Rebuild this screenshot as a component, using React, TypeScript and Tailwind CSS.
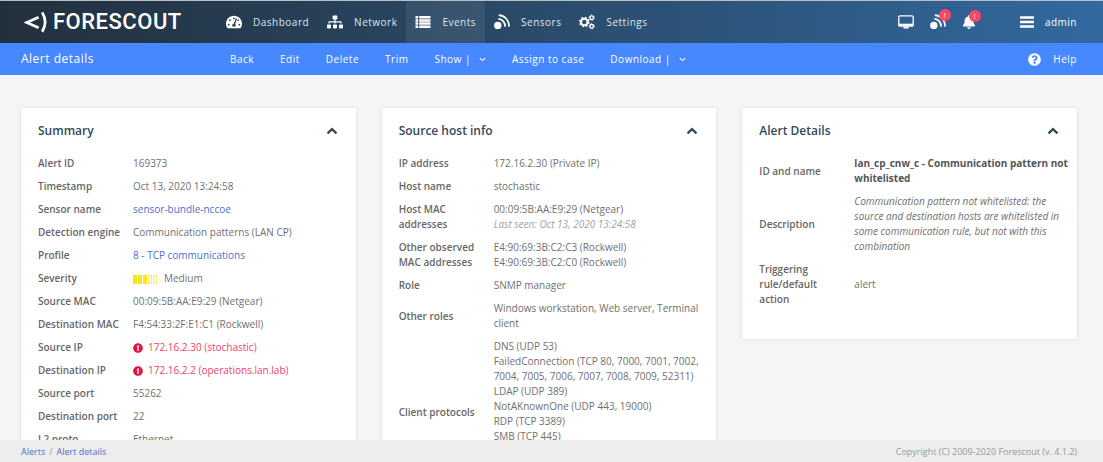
import { useState } from 'react';
import type { ReactNode } from 'react';
import { FaBell, FaExclamationCircle, FaQuestionCircle, FaSitemap, FaTachometerAlt } from 'react-icons/fa';

type Row = { label: string; value: ReactNode; className?: string };

const SensorIcon = ({ className }: { className?: string }) => (
  <svg viewBox="0 0 16 16" fill="none" stroke="currentColor" className={className}>
    <circle cx="3.8" cy="11.4" r="3.7" fill="currentColor" stroke="none" />
    <path d="M4.4 4.9a7 7 0 0 1 6.6 7.7" strokeWidth="1.7" />
    <path d="M4.8 1.2a10.6 10.6 0 0 1 10.200 11.400" strokeWidth="1.7" />
  </svg>
);

const MonitorIcon = () => (
  <svg viewBox="0 0 16 14" fill="none" stroke="currentColor" className="w-4 h-[14px]">
    <rect x="0.8" y="0.8" width="14.4" height="10.4" rx="1.2" strokeWidth="1.3" />
    <path d="M1 9.8h14" strokeWidth="2.2" />
    <path d="M5.4 12.6h5.2" strokeWidth="1.8" />
  </svg>
);

const ListIcon = () => (
  <svg viewBox="0 0 16 16" fill="none" stroke="currentColor" className="w-4 h-4">
    <path d="M0.500 3.200h2.700M0.500 6.400h2.700M0.500 9.600h2.700M0.500 12.800h2.700M4.200 3.200h11.300M4.200 6.400h11.300M4.200 9.600h11.300M4.200 12.800h11.300" strokeWidth="2.500" />
  </svg>
);

const BarsIcon = () => (
  <svg viewBox="0 0 14 14" fill="none" stroke="currentColor" className="w-[14px] h-[14px]">
    <path d="M0 2.500h14M0 7h14M0 11.500h14" strokeWidth="2.300" />
  </svg>
);

// each gear is a ring with a dashed ring around it for the teeth
const GearsIcon = () => (
  <svg viewBox="0 0 16 16" fill="none" stroke="currentColor" className="w-4 h-4">
    <circle cx="5.3" cy="8" r="3.3" strokeWidth="2.1" />
    <circle cx="5.3" cy="8" r="4.600" strokeWidth="1.400" strokeDasharray="1.900 1.713" />
    <circle cx="12.7" cy="3.7" r="1.8" strokeWidth="1.3" />
    <circle cx="12.7" cy="3.7" r="2.600" strokeWidth="1" strokeDasharray="1.300 1.423" />
    <circle cx="12.7" cy="12.3" r="1.8" strokeWidth="1.3" />
    <circle cx="12.7" cy="12.3" r="2.600" strokeWidth="1" strokeDasharray="1.300 1.423" />
  </svg>
);

const Chevron = ({ className, weight = 2.3 }: { className?: string; weight?: number }) => (
  <svg viewBox="0 0 12 8" fill="none" stroke="currentColor" className={className}>
    <path d="M1.5 6.4 6 2.1l4.5 4.3" strokeWidth={weight} />
  </svg>
);

const Logo = () => (
  <a href="#" className="flex items-center gap-1 text-white">
    <svg viewBox="0 0 25 22" fill="none" stroke="currentColor" className="w-[25px] h-[22px]">
      <path d="M14.6 6.300 2.600 11.500l12 5.200" strokeWidth="2.700" />
      <path d="M18.200 1.400c3.800 6.200 3.800 13.200 0 19.400" strokeWidth="2.700" />
    </svg>
    <span className="font-['Roboto',sans-serif] text-[22px] leading-6 font-medium">FORESCOUT</span>
  </a>
);

const SeverityBar = ({ level }: { level: number }) => (
  <span className="inline-flex gap-px mr-[7px] align-middle">
    {[1, 2, 3, 4, 5].map(n => (
      <span key={n} className={n <= level ? 'w-1 h-[9px] bg-[#f8e71c]' : 'w-1 h-[9px] border border-[#f6ec6a]'} />
    ))}
  </span>
);

const HostLink = ({ children }: { children: ReactNode }) => (
  <a href="#" className="flex items-center gap-[5px] text-[#ee4266]">
    <FaExclamationCircle className="w-[10px] h-[10px] text-[#e0163f]" />
    {children}
  </a>
);

const BlueLink = ({ children }: { children: ReactNode }) => (
  <a href="#" className="text-[#4a6fd0]">{children}</a>
);

const navItems = [
  { name: 'Dashboard', icon: <FaTachometerAlt className="w-4 h-4" /> },
  { name: 'Network', icon: <FaSitemap className="w-4 h-4" /> },
  { name: 'Events', icon: <ListIcon />, active: true },
  { name: 'Sensors', icon: <SensorIcon className="w-4 h-4" /> },
  { name: 'Settings', icon: <GearsIcon /> },
];

const actions = [
  { name: 'Back' },
  { name: 'Edit' },
  { name: 'Delete' },
  { name: 'Trim' },
  { name: 'Show', menu: true },
  { name: 'Assign to case' },
  { name: 'Download', menu: true },
];

const summary: Row[] = [
  { label: 'Alert ID', value: '169373' },
  { label: 'Timestamp', value: 'Oct 13, 2020 13:24:58' },
  { label: 'Sensor name', value: <BlueLink>sensor-bundle-nccoe</BlueLink> },
  { label: 'Detection engine', value: 'Communication patterns (LAN CP)' },
  { label: 'Profile', value: <BlueLink>8 - TCP communications</BlueLink> },
  { label: 'Severity', value: <><SeverityBar level={3} />Medium</> },
  { label: 'Source MAC', value: '00:09:5B:AA:E9:29 (Netgear)' },
  { label: 'Destination MAC', value: 'F4:54:33:2F:E1:C1 (Rockwell)' },
  { label: 'Source IP', value: <HostLink>172.16.2.30 (stochastic)</HostLink> },
  { label: 'Destination IP', value: <HostLink>172.16.2.2 (operations.lan.lab)</HostLink> },
  { label: 'Source port', value: '55262' },
  { label: 'Destination port', value: '22' },
  { label: 'L2 proto', value: 'Ethernet' },
];

const protocols = [
  'DNS (UDP 53)',
  'FailedConnection (TCP 80, 7000, 7001, 7002, 7004, 7005, 7006, 7007, 7008, 7009, 52311)',
  'LDAP (UDP 389)',
  'NotAKnownOne (UDP 443, 19000)',
  'RDP (TCP 3389)',
  'SMB (TCP 445)',
];

const sourceHost: Row[] = [
  { label: 'IP address', value: '172.16.2.30 (Private IP)' },
  { label: 'Host name', value: 'stochastic' },
  {
    label: 'Host MAC addresses',
    value: <>00:09:5B:AA:E9:29 (Netgear)<div className="italic text-[#a3a3a3]">Last seen: Oct 13, 2020 13:24:58</div></>,
  },
  {
    label: 'Other observed MAC addresses',
    value: <>E4:90:69:3B:C2:C3 (Rockwell)<div>E4:90:69:3B:C2:C0 (Rockwell)</div></>,
  },
  { label: 'Role', value: 'SNMP manager' },
  { label: 'Other roles', value: 'Windows workstation, Web server, Terminal client' },
  {
    label: 'Client protocols',
    value: protocols.map(p => <div key={p}>{p}</div>),
    className: 'h-[154px] align-top',
  },
];

const alertDetails: Row[] = [
  { label: 'ID and name', value: 'lan_cp_cnw_c - Communication pattern not whitelisted', className: 'font-bold text-[#555]' },
  {
    label: 'Description',
    value: 'Communication pattern not whitelisted: the source and destination hosts are whitelisted in some communication rule, but not with this combination',
    className: 'italic',
  },
  { label: 'Triggering rule/default action', value: 'alert' },
];

const Card = ({ title, rows }: { title: string; rows: Row[] }) => {
  const [open, setOpen] = useState(true);

  return (
    <section className="bg-white pl-[17px] pr-1 pb-7 shadow-[0_0_3px_rgba(0,0,0,0.12)]">
      <div className="flex items-center justify-between h-11 pt-[2px] pr-[14px] text-[#34495a]">
        <h2 className="text-[12px] leading-4 font-semibold">{title}</h2>
        <button aria-label={`Toggle ${title}`} aria-expanded={open} onClick={() => setOpen(!open)}>
          <Chevron className={open ? 'w-3 h-2' : 'w-3 h-2 rotate-180'} />
        </button>
      </div>
      {open && (
        <table className="w-full table-fixed text-[10px] leading-[15px] text-[#707070]">
          <tbody>
            {rows.map(row => (
              <tr key={row.label}>
                <th scope="row" className="w-[95px] py-1 pr-2 text-left font-semibold text-[#666]">{row.label}</th>
                <td className={`py-1 ${row.className || ''}`}>{row.value}</td>
              </tr>
            ))}
          </tbody>
        </table>
      )}
    </section>
  );
};

const Badge = () => (
  <span className="absolute -top-[5px] -right-[5px] w-3 h-3 rounded-full bg-[#ff4665] text-white text-[8px] leading-3 text-center">!</span>
);

export default function App() {
  return (
    <div className="h-screen flex flex-col overflow-hidden bg-[#f5f5f5] font-['Open_Sans',sans-serif]">

      {/* Main navigation */}
      <header className="flex shrink-0 h-[43px] border-t border-[#b8c0c6] bg-linear-to-r from-[#22303d] to-[#32699f] pl-6 pr-[26px] text-[10px] tracking-wider text-[#dfe6ec]">
        <div className="flex items-center w-[193px] shrink-0">
          <Logo />
        </div>
        <nav className="flex">
          {navItems.map(item => (
            <a key={item.name} href="#" className={`flex items-center gap-[11px] px-[9px] ${item.active ? 'bg-white/7' : ''}`}>
              <span className="text-white">{item.icon}</span>
              {item.name}
            </a>
          ))}
        </nav>
        <div className="flex items-center ml-auto text-white">
          <button aria-label="Monitor" className="mr-4"><MonitorIcon /></button>
          <button aria-label="Sensor alerts" className="relative mr-4">
            <SensorIcon className="w-4 h-4" />
            <Badge />
          </button>
          <button aria-label="Notifications" className="relative">
            <FaBell className="w-[14px] h-[14px]" />
            <Badge />
          </button>
          <button className="flex items-center gap-[11px] ml-[44px] tracking-wider">
            <BarsIcon />
            admin
          </button>
        </div>
      </header>

      {/* Page actions */}
      <div className="flex items-center shrink-0 h-8 pl-[21px] pr-[26px] bg-[#4787ff] text-[10px] tracking-wider text-white">
        <h1 className="w-[209px] shrink-0 text-[12px]">Alert details</h1>
        <div className="flex items-center gap-[26px]">
          {actions.map(action => (
            <button key={action.name} className="flex items-center gap-2 tracking-wider">
              {action.menu ? `${action.name} |` : action.name}
              {action.menu && <Chevron className="w-[7px] h-[5px] rotate-180" weight={1.8} />}
            </button>
          ))}
        </div>
        <a href="#" className="flex items-center gap-3 ml-auto">
          <FaQuestionCircle className="w-[13px] h-[13px]" />
          Help
        </a>
      </div>

      {/* Cards */}
      <main className="flex-1 min-h-0 overflow-y-auto [scrollbar-width:none] pt-[33px] pl-[21px] pr-[26px]">
        <div className="grid grid-cols-3 items-start gap-[26px]">
          <Card title="Summary" rows={summary} />
          <Card title="Source host info" rows={sourceHost} />
          <Card title="Alert Details" rows={alertDetails} />
        </div>
      </main>

      <footer className="flex items-center justify-between shrink-0 h-[22px] pt-[2px] pl-[21px] pr-[26px] bg-[#ededed] text-[9px] text-[#999]">
        <div className="flex gap-1">
          <BlueLink>Alerts</BlueLink>
          <span>/</span>
          <BlueLink>Alert details</BlueLink>
        </div>
        <p>Copyright (C) 2009-2020 Forescout (v. 4.1.2)</p>
      </footer>
    </div>
  );
}
